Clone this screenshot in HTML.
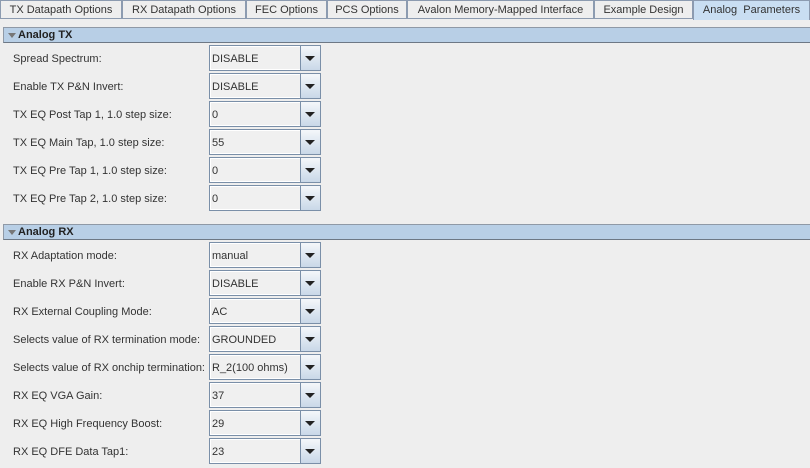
<!DOCTYPE html>
<html><head><style>
body{margin:0;width:810px;height:468px;background:#eeeeee;font-family:"Liberation Sans","DejaVu Sans",sans-serif;font-size:11px;color:#333;position:relative;overflow:hidden;white-space:nowrap}
.tab{position:absolute;top:0;height:18px;line-height:18px;border:1px solid #8c9bb0;border-bottom:none;background:#eeeeee;text-align:center;box-sizing:border-box;color:#333}
.tab.sel{background:#c9def2;height:20px}
.tabline{position:absolute;top:18px;left:0;width:810px;height:1px;background:#8c9bb0}
.hdr{position:absolute;left:3px;width:807px;height:16px;background:#b8cfe6;border-top:1px solid #8f99a6;border-bottom:1px solid #6d7885;box-sizing:border-box;border-left:1px solid #8f99a6;font-weight:bold;line-height:14px;padding-left:14px;color:#222}
.hdr:before{content:"";position:absolute;left:4px;top:5px;border-left:4px solid transparent;border-right:4px solid transparent;border-top:5px solid #777}
.lbl{position:absolute;left:13px;margin-top:1px}
.cb{position:absolute;left:209px;width:112px;height:26px;border:1px solid #7a8fa8;box-sizing:border-box;background:#f0f0f0}
.cb span{position:absolute;left:2px;top:7px}
.cb i{position:absolute;right:0;top:0;width:19px;height:24px;border-left:1px solid #7a8fa8;background:linear-gradient(#f4f7fa,#c9d8e8)}
.cb i:after{content:"";position:absolute;left:4px;top:10px;border-left:5px solid transparent;border-right:5px solid transparent;border-top:5px solid #222}
.cb:before{content:"";position:absolute;left:0;top:0;right:19px;bottom:0;border:1px solid #fff;border-right:none}
</style></head><body>
<div class="tab" style="left:0;width:122px">TX Datapath Options</div>
<div class="tab" style="left:122px;width:124px">RX Datapath Options</div>
<div class="tab" style="left:246px;width:81px">FEC Options</div>
<div class="tab" style="left:327px;width:80px">PCS Options</div>
<div class="tab" style="left:407px;width:187px">Avalon Memory-Mapped Interface</div>
<div class="tab" style="left:594px;width:99px">Example Design</div>
<div class="tabline"></div>
<div class="tab sel" style="left:693px;width:117px;border-bottom:none">Analog &nbsp;Parameters</div>

<div class="hdr" style="top:27px">Analog TX</div>
<div class="lbl" style="top:52px">Spread Spectrum:</div><div class="cb" style="top:45px"><span>DISABLE</span><i></i></div>
<div class="lbl" style="top:80px">Enable TX P&amp;N Invert:</div><div class="cb" style="top:73px"><span>DISABLE</span><i></i></div>
<div class="lbl" style="top:108px">TX EQ Post Tap 1, 1.0 step size:</div><div class="cb" style="top:101px"><span>0</span><i></i></div>
<div class="lbl" style="top:136px">TX EQ Main Tap, 1.0 step size:</div><div class="cb" style="top:129px"><span>55</span><i></i></div>
<div class="lbl" style="top:164px">TX EQ Pre Tap 1, 1.0 step size:</div><div class="cb" style="top:157px"><span>0</span><i></i></div>
<div class="lbl" style="top:192px">TX EQ Pre Tap 2, 1.0 step size:</div><div class="cb" style="top:185px"><span>0</span><i></i></div>

<div class="hdr" style="top:224px">Analog RX</div>
<div class="lbl" style="top:249px">RX Adaptation mode:</div><div class="cb" style="top:242px"><span>manual</span><i></i></div>
<div class="lbl" style="top:277px">Enable RX P&amp;N Invert:</div><div class="cb" style="top:270px"><span>DISABLE</span><i></i></div>
<div class="lbl" style="top:305px">RX External Coupling Mode:</div><div class="cb" style="top:298px"><span>AC</span><i></i></div>
<div class="lbl" style="top:333px">Selects value of RX termination mode:</div><div class="cb" style="top:326px"><span>GROUNDED</span><i></i></div>
<div class="lbl" style="top:361px">Selects value of RX onchip termination:</div><div class="cb" style="top:354px"><span>R_2(100 ohms)</span><i></i></div>
<div class="lbl" style="top:389px">RX EQ VGA Gain:</div><div class="cb" style="top:382px"><span>37</span><i></i></div>
<div class="lbl" style="top:417px">RX EQ High Frequency Boost:</div><div class="cb" style="top:410px"><span>29</span><i></i></div>
<div class="lbl" style="top:445px">RX EQ DFE Data Tap1:</div><div class="cb" style="top:438px"><span>23</span><i></i></div>
</body></html>
